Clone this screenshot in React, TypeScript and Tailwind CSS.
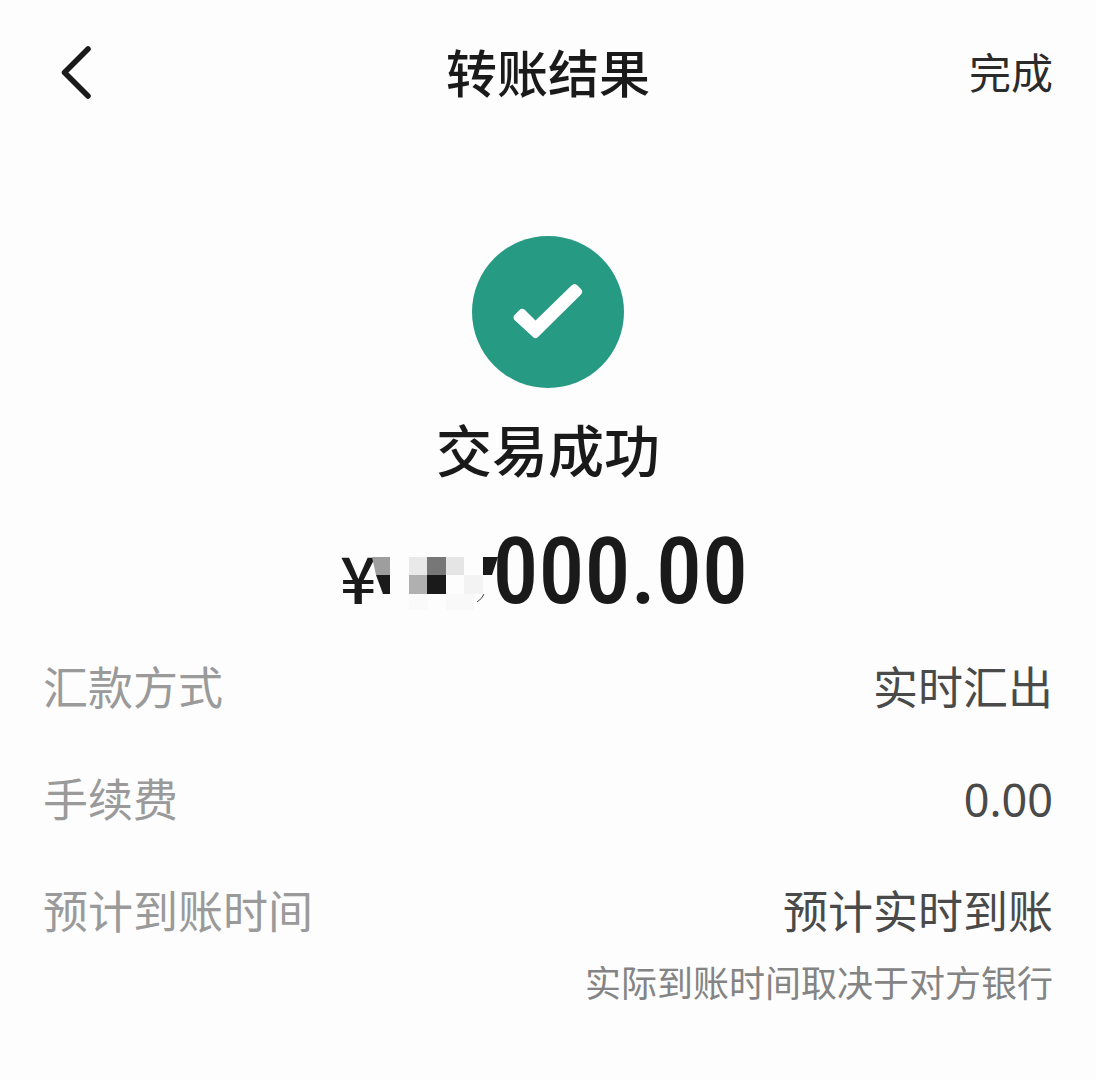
import { clsx } from 'clsx';

type Detail = {
  label: string;
  value: string;
  note?: string;
};

const details: Detail[] = [
  { label: '汇款方式', value: '实时汇出' },
  { label: '手续费', value: '0.00' },
  { label: '预计到账时间', value: '预计实时到账', note: '实际到账时间取决于对方银行' },
];

const BackIcon = () => (
  <svg viewBox="0 0 32 56" className="w-8 h-14" fill="none" aria-hidden="true">
    <path
      d="M29 6 L5.5 29.5 L29 53"
      stroke="#1a1a1a"
      strokeWidth="5.5"
      strokeLinecap="round"
      strokeLinejoin="round"
    />
  </svg>
);

const SuccessIcon = () => (
  <svg viewBox="0 0 152 152" className="w-[152px] h-[152px]" aria-hidden="true">
    <circle cx="76" cy="76" r="76" fill="#279a83" />
    <path
      d="M47.5 74 Q50 71.5 53 74 L63.5 84.5 L99.5 49.5 Q102.5 46.5 105.5 49.5 L109 53 Q111.5 55.5 109 58.5 L66 101 Q63.5 103.5 61 101 L42.5 84 Q40.5 81.5 42.5 79 Z"
      fill="#fff"
    />
  </svg>
);

// Pixelated cover over the leading digits
const AmountMask = () => (
  <svg viewBox="0 0 128 64" className="w-32 h-16 -ml-1 -mr-2" shapeRendering="crispEdges" aria-hidden="true">
    <rect x="37" y="46" width="19" height="16" fill="#fafafa" />
    <rect x="74" y="46" width="28" height="16" fill="#f9f9f9" />
    <rect x="37" y="9" width="18" height="18" fill="#e9e9e9" />
    <rect x="55" y="9" width="19" height="18" fill="#777" />
    <rect x="74" y="9" width="18" height="18" fill="#e5e5e5" />
    <rect x="37" y="27" width="18" height="19" fill="#b0b0b0" />
    <rect x="55" y="27" width="19" height="19" fill="#1a1a1a" />
    <rect x="92" y="27" width="19" height="19" fill="#f3f3f3" />
    <g shapeRendering="geometricPrecision">
      <path d="M0 9 H18 V27 H4 Z" fill="#9e9e9e" />
      <path d="M4 27 H18 V46 H11 Z" fill="#1a1a1a" />
      <path d="M111 9 H126 L120 27 H111 Z" fill="#1a1a1a" />
      <path d="M105 54 Q110 51 112 46" stroke="#444" strokeWidth="1" fill="none" />
    </g>
  </svg>
);

const DetailRow = ({ label, value, note }: Detail) => (
  <div className="flex justify-between items-start">
    <dt className="text-[#9a9a9a]">{label}</dt>
    <dd className="text-right text-[#4a4a4a]">
      {value}
      {note && <p className="mt-4 text-4xl leading-[48px] text-[#848484]">{note}</p>}
    </dd>
  </div>
);

const App = () => {
  return (
    <div
      className={clsx(
        'min-h-screen bg-[#fdfdfd] text-[#1a1a1a] flex flex-col',
        'font-["Noto_Sans_CJK_SC",sans-serif]',
      )}
    >
      {/* Header */}
      <header className="grid grid-cols-3 items-center px-[43px] pt-[39px]">
        <button type="button" aria-label="返回" className="justify-self-start pl-4">
          <BackIcon />
        </button>
        <h1 className="text-center text-[51px] leading-16 font-medium whitespace-nowrap">转账结果</h1>
        <button type="button" className="justify-self-end text-[42px] leading-16 text-[#2b2b2b]">
          完成
        </button>
      </header>

      {/* Result */}
      <main className="pt-[133px]">
        <section className="flex flex-col items-center">
          <SuccessIcon />
          <h2 className="mt-6 text-[56px] leading-18 font-medium">交易成功</h2>
          <div className="mt-8 pr-2 flex items-end h-24 font-medium">
            <span className="text-[64px] leading-18">¥</span>
            <AmountMask />
            <span className='text-[92px] leading-20 font-["Roboto_Condensed","Roboto",sans-serif]'>000.00</span>
          </div>
        </section>

        <dl className='mt-11 px-[43px] flex flex-col gap-12 text-[45px] leading-16 font-["Noto_Sans","Noto_Sans_CJK_SC",sans-serif]'>
          {details.map((item) => (
            <DetailRow key={item.label} {...item} />
          ))}
        </dl>
      </main>
    </div>
  );
};

export default App;
